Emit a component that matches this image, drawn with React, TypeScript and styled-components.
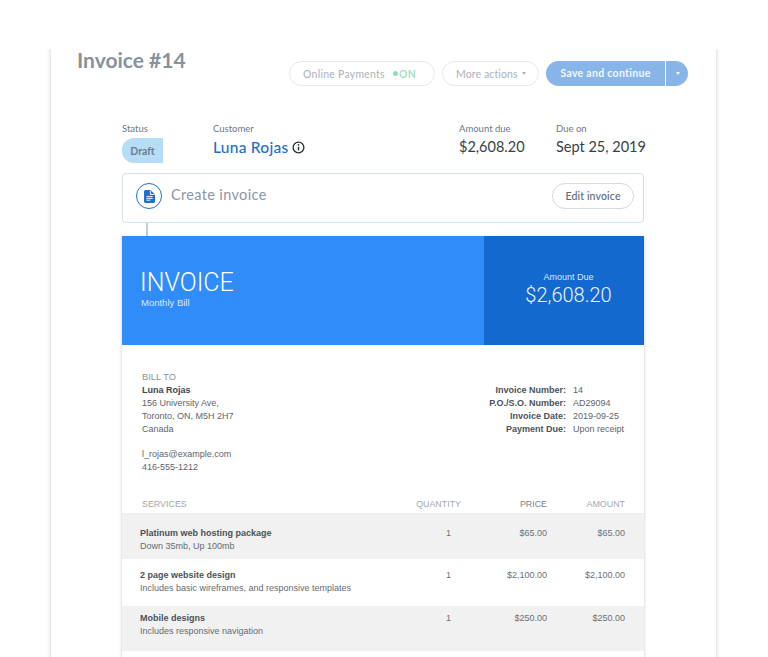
import React from 'react';
import styled, { createGlobalStyle } from 'styled-components';

const GlobalStyle = createGlobalStyle`
  html, body {
    margin: 0;
    height: 100%;
    overflow: hidden;
    background: #fff;
  }

  * {
    box-sizing: border-box;
  }
`;

const UI_FONT = `Lato, "Open Sans", sans-serif`;
const DOC_FONT = `"Liberation Sans", Arial, sans-serif`;
const LIGHT_FONT = `Roboto, "Liberation Sans", sans-serif`;

const billLines = ['156 University Ave,', 'Toronto, ON, M5H 2H7', 'Canada'];

const invoiceMeta = [
  { label: 'Invoice Number:', value: '14' },
  { label: 'P.O./S.O. Number:', value: 'AD29094' },
  { label: 'Invoice Date:', value: '2019-09-25' },
  { label: 'Payment Due:', value: 'Upon receipt' },
];

const services = [
  {
    name: 'Platinum web hosting package',
    desc: 'Down 35mb, Up 100mb',
    price: '$65.00',
    amount: '$65.00',
    height: 45,
    top: 13,
    shaded: true,
  },
  {
    name: '2 page website design',
    desc: 'Includes basic wireframes, and responsive templates',
    price: '$2,100.00',
    amount: '$2,100.00',
    height: 47,
    top: 10,
    shaded: false,
  },
  {
    name: 'Mobile designs',
    desc: 'Includes responsive navigation',
    price: '$250.00',
    amount: '$250.00',
    height: 45,
    top: 6,
    shaded: true,
  },
];

const App: React.FC = () => {
  return (
    <>
      <GlobalStyle />
      <Page>
        <Card>
          <TopBar>
            <Title>Invoice #14</Title>
            <Actions>
              <PaymentsPill>
                Online Payments
                <OnState>
                  <OnDot />
                  ON
                </OnState>
              </PaymentsPill>
              <MorePill>
                More actions
                <Caret />
              </MorePill>
              <SaveGroup>
                <SaveButton>Save and continue</SaveButton>
                <SaveCaretButton>
                  <Caret $light />
                </SaveCaretButton>
              </SaveGroup>
            </Actions>
          </TopBar>

          <Summary>
            <StatusCol>
              <FieldLabel>Status</FieldLabel>
              <DraftBadge>Draft</DraftBadge>
            </StatusCol>
            <CustomerCol>
              <FieldLabel>Customer</FieldLabel>
              <CustomerName>
                Luna Rojas
                <svg width="13" height="13" viewBox="0 0 13 13" fill="none">
                  <circle cx="6.5" cy="6.5" r="5.4" stroke="#2a2f35" strokeWidth="1.3" />
                  <path d="M6.5 5.8v3.6" stroke="#2a2f35" strokeWidth="1.4" />
                  <circle cx="6.5" cy="3.9" r="0.85" fill="#2a2f35" />
                </svg>
              </CustomerName>
            </CustomerCol>
            <AmountCol>
              <FieldLabel>Amount due</FieldLabel>
              <FieldValue>$2,608.20</FieldValue>
            </AmountCol>
            <div>
              <FieldLabel>Due on</FieldLabel>
              <FieldValue>Sept 25, 2019</FieldValue>
            </div>
          </Summary>

          <CreateBox>
            <CreateIcon>
              <svg width="11" height="13" viewBox="0 0 11 13">
                <path
                  d="M1.5 0h5L11 4.4v7.1c0 .8-.7 1.5-1.5 1.5h-8C.7 13 0 12.3 0 11.5v-10C0 .7.7 0 1.5 0z"
                  fill="#1f6fd2"
                />
                <path d="M6.4.6v3.9h4" fill="none" stroke="#fff" strokeWidth="0.9" />
                <path d="M2.4 6.6h6.2M2.4 8.4h6.2M2.4 10.2h4" stroke="#fff" strokeWidth="0.9" />
              </svg>
            </CreateIcon>
            <CreateText>Create invoice</CreateText>
            <EditButton>Edit invoice</EditButton>
          </CreateBox>
          <Connector />

          <Invoice>
            <Banner>
              <BannerTitle>
                <BannerHeading>INVOICE</BannerHeading>
                <BannerSub>Monthly Bill</BannerSub>
              </BannerTitle>
              <BannerDue>
                <DueLabel>Amount Due</DueLabel>
                <DueValue>$2,608.20</DueValue>
              </BannerDue>
            </Banner>

            <Details>
              <BillTo>
                <BillHeading>BILL TO</BillHeading>
                <BillName>Luna Rojas</BillName>
                {billLines.map((line) => (
                  <div key={line}>{line}</div>
                ))}
                <BillGap />
                <div>l_rojas@example.com</div>
                <div>416-555-1212</div>
              </BillTo>
              <MetaGrid>
                {invoiceMeta.map((row) => (
                  <React.Fragment key={row.label}>
                    <MetaLabel>{row.label}</MetaLabel>
                    <span>{row.value}</span>
                  </React.Fragment>
                ))}
              </MetaGrid>
            </Details>

            <TableHead>
              <HeadCell $left>SERVICES</HeadCell>
              <HeadCell>QUANTITY</HeadCell>
              <HeadCell $dark>PRICE</HeadCell>
              <HeadCell>AMOUNT</HeadCell>
            </TableHead>
            {services.map((item) => (
              <ServiceRow key={item.name} $shaded={item.shaded} $height={item.height} $top={item.top}>
                <div>
                  <ServiceName>{item.name}</ServiceName>
                  <ServiceDesc>{item.desc}</ServiceDesc>
                </div>
                <QtyCell>1</QtyCell>
                <MoneyCell>{item.price}</MoneyCell>
                <MoneyCell>{item.amount}</MoneyCell>
              </ServiceRow>
            ))}
            <TableTail />
          </Invoice>
        </Card>
      </Page>
    </>
  );
};

const Page = styled.div`
  height: 657px;
  overflow: hidden;
  padding: 47px 52px 0 51px;
`;

const Card = styled.div`
  background: #fff;
  min-height: 700px;
  box-shadow: 0 0 4px rgba(60, 70, 80, 0.3);
  clip-path: inset(2px -8px 0 -8px);
`;

const TopBar = styled.div`
  display: flex;
  align-items: flex-start;
  justify-content: space-between;
  padding: 0 28px 0 26px;
  font-family: ${UI_FONT};
`;

const Title = styled.h1`
  margin: 0;
  font-size: 21px;
  line-height: 26px;
  font-weight: 700;
  color: #87929b;
`;

const Actions = styled.div`
  display: flex;
  gap: 7px;
  margin-top: 14px;
`;

const Pill = styled.div`
  display: flex;
  align-items: center;
  height: 25px;
  border: 1px solid #e4e9ed;
  border-radius: 13px;
  font-size: 10.5px;
  letter-spacing: 0.25px;
  color: #aab2b9;
  background: #fff;
`;

const PaymentsPill = styled(Pill)`
  width: 146px;
  padding-left: 13px;
`;

const OnState = styled.span`
  display: flex;
  align-items: center;
  margin-left: 8px;
  color: #a3e2c3;
  font-weight: 700;
`;

const OnDot = styled.span`
  width: 5px;
  height: 5px;
  margin-right: 1px;
  border-radius: 50%;
  background: #8fdcb6;
`;

const MorePill = styled(Pill)`
  width: 97px;
  padding-left: 13px;
  letter-spacing: 0.12px;
`;

const Caret = styled.span<{ $light?: boolean }>`
  width: 0;
  height: 0;
  margin-left: 4px;
  border-left: 2.5px solid transparent;
  border-right: 2.5px solid transparent;
  border-top: 3px solid ${(p) => (p.$light ? '#fff' : '#aab2b9')};
`;

const SaveGroup = styled.div`
  display: flex;
  gap: 1px;
  height: 25px;
`;

const SaveButton = styled.div`
  display: flex;
  align-items: center;
  justify-content: center;
  width: 119px;
  padding-bottom: 2px;
  border-radius: 13px 0 0 13px;
  background: #88b5e8;
  color: #f2f7fd;
  font-size: 10.5px;
  font-weight: 700;
  letter-spacing: 0.3px;
`;

const SaveCaretButton = styled.div`
  display: flex;
  align-items: center;
  justify-content: center;
  width: 22px;
  padding-right: 3px;
  border-radius: 0 13px 13px 0;
  background: #88b5e8;
`;

const Summary = styled.div`
  display: flex;
  margin-top: 37px;
  padding-left: 71px;
  font-family: ${UI_FONT};
`;

const StatusCol = styled.div`
  width: 91px;
`;

const CustomerCol = styled.div`
  width: 246px;
`;

const AmountCol = styled.div`
  width: 97px;
`;

const FieldLabel = styled.div`
  font-size: 9.5px;
  line-height: 12px;
  color: #6c7882;
`;

const DraftBadge = styled.div`
  display: flex;
  align-items: center;
  justify-content: center;
  width: 41px;
  height: 25px;
  margin-top: 3px;
  border-radius: 12px 1px 1px 12px;
  background: #b6dcf6;
  color: #6d7d8c;
  font-size: 10.5px;
  font-weight: 700;
`;

const CustomerName = styled.div`
  display: flex;
  align-items: center;
  gap: 4px;
  margin-top: 2px;
  font-size: 15.5px;
  line-height: 20px;
  font-weight: 500;
  letter-spacing: 0.25px;
  color: #1d70d1;
`;

const FieldValue = styled.div`
  margin-top: 2px;
  font-size: 14.5px;
  line-height: 20px;
  color: #363f48;
`;

const CreateBox = styled.div`
  display: flex;
  align-items: center;
  width: 522px;
  height: 50px;
  margin: 10px 0 0 71px;
  padding: 0 9px 4px 13px;
  border: 1px solid #d8e0e7;
  border-radius: 4px;
  font-family: ${UI_FONT};
`;

const CreateIcon = styled.div`
  display: flex;
  align-items: center;
  justify-content: center;
  width: 26px;
  height: 26px;
  border: 1.5px solid #1f6fd2;
  border-radius: 50%;
`;

const CreateText = styled.div`
  margin-left: 9px;
  padding-bottom: 3px;
  font-size: 14.5px;
  letter-spacing: 0.35px;
  color: #8c98a3;
`;

const EditButton = styled.div`
  display: flex;
  align-items: center;
  justify-content: center;
  width: 82px;
  height: 26px;
  margin-left: auto;
  border: 1px solid #d3dae0;
  border-radius: 13px;
  font-size: 10.5px;
  letter-spacing: 0.15px;
  font-weight: 500;
  color: #5d6973;
`;

const Connector = styled.div`
  width: 2px;
  height: 13px;
  margin-left: 95px;
  background: #c3cdd6;
`;

const Invoice = styled.div`
  width: 522px;
  margin-left: 71px;
  background: #fff;
  font-family: ${DOC_FONT};
  box-shadow: -2px 0 2px -1px rgba(60, 70, 80, 0.16), 2px 0 2px -1px rgba(60, 70, 80, 0.16);
`;

const Banner = styled.div`
  display: flex;
  height: 109px;
  background: #308cf8;
  color: #fff;
`;

const BannerTitle = styled.div`
  flex: 1;
  padding: 33px 0 0 18px;
`;

const BannerHeading = styled.div`
  font-family: ${LIGHT_FONT};
  font-size: 25px;
  font-weight: 300;
  line-height: 28px;
`;

const BannerSub = styled.div`
  padding-left: 1px;
  font-size: 9.5px;
  line-height: 12px;
  color: #d9eaff;
`;

const BannerDue = styled.div`
  width: 160px;
  padding: 35px 0 0 9px;
  background: #1469cf;
  text-align: center;
`;

const DueLabel = styled.div`
  font-size: 9px;
  line-height: 12px;
  color: #d7e7fa;
`;

const DueValue = styled.div`
  margin-top: 1px;
  font-family: ${LIGHT_FONT};
  font-size: 20px;
  font-weight: 300;
  line-height: 22px;
  color: #eef5fc;
`;

const Details = styled.div`
  display: flex;
  align-items: flex-start;
  justify-content: space-between;
  padding: 26.4px 19px 0 20px;
  height: 153px;
  font-size: 9px;
  line-height: 12.85px;
  color: #5d656c;
`;

const BillTo = styled.div``;

const BillHeading = styled.div`
  color: #8b9197;
  font-size: 9.3px;
`;

const BillName = styled.div`
  font-weight: 700;
  color: #3e464d;
`;

const BillGap = styled.div`
  height: 12.85px;
`;

const MetaGrid = styled.div`
  display: grid;
  grid-template-columns: auto 52px;
  column-gap: 7px;
  margin-top: 13px;
  white-space: nowrap;
`;

const MetaLabel = styled.span`
  text-align: right;
  font-weight: 700;
  color: #4b5359;
`;

const TableHead = styled.div`
  display: grid;
  grid-template-columns: 1fr 50px 86px 78px;
  height: 16px;
  padding: 0 19px 0 20px;
  border-bottom: 1px solid #eceef0;
`;

const HeadCell = styled.div<{ $left?: boolean; $dark?: boolean }>`
  font-size: 8.9px;
  line-height: 12px;
  white-space: nowrap;
  text-align: ${(p) => (p.$left ? 'left' : 'right')};
  color: ${(p) => (p.$dark ? '#7c8389' : '#a3a8ad')};
`;

const ServiceRow = styled.div<{ $shaded: boolean; $height: number; $top: number }>`
  display: grid;
  grid-template-columns: 1fr 50px 86px 78px;
  height: ${(p) => p.$height}px;
  padding: ${(p) => p.$top}px 19px 0 18px;
  background: ${(p) => (p.$shaded ? '#f1f1f2' : '#fff')};
  font-size: 9px;
  line-height: 13px;
  color: #6a7278;
`;

const ServiceName = styled.div`
  font-weight: 700;
  color: #4a5258;
`;

const ServiceDesc = styled.div`
  color: #646c72;
`;

const QtyCell = styled.div`
  padding-right: 10px;
  text-align: right;
`;

const MoneyCell = styled.div`
  text-align: right;
`;

const TableTail = styled.div`
  height: 20px;
`;

export default App;
